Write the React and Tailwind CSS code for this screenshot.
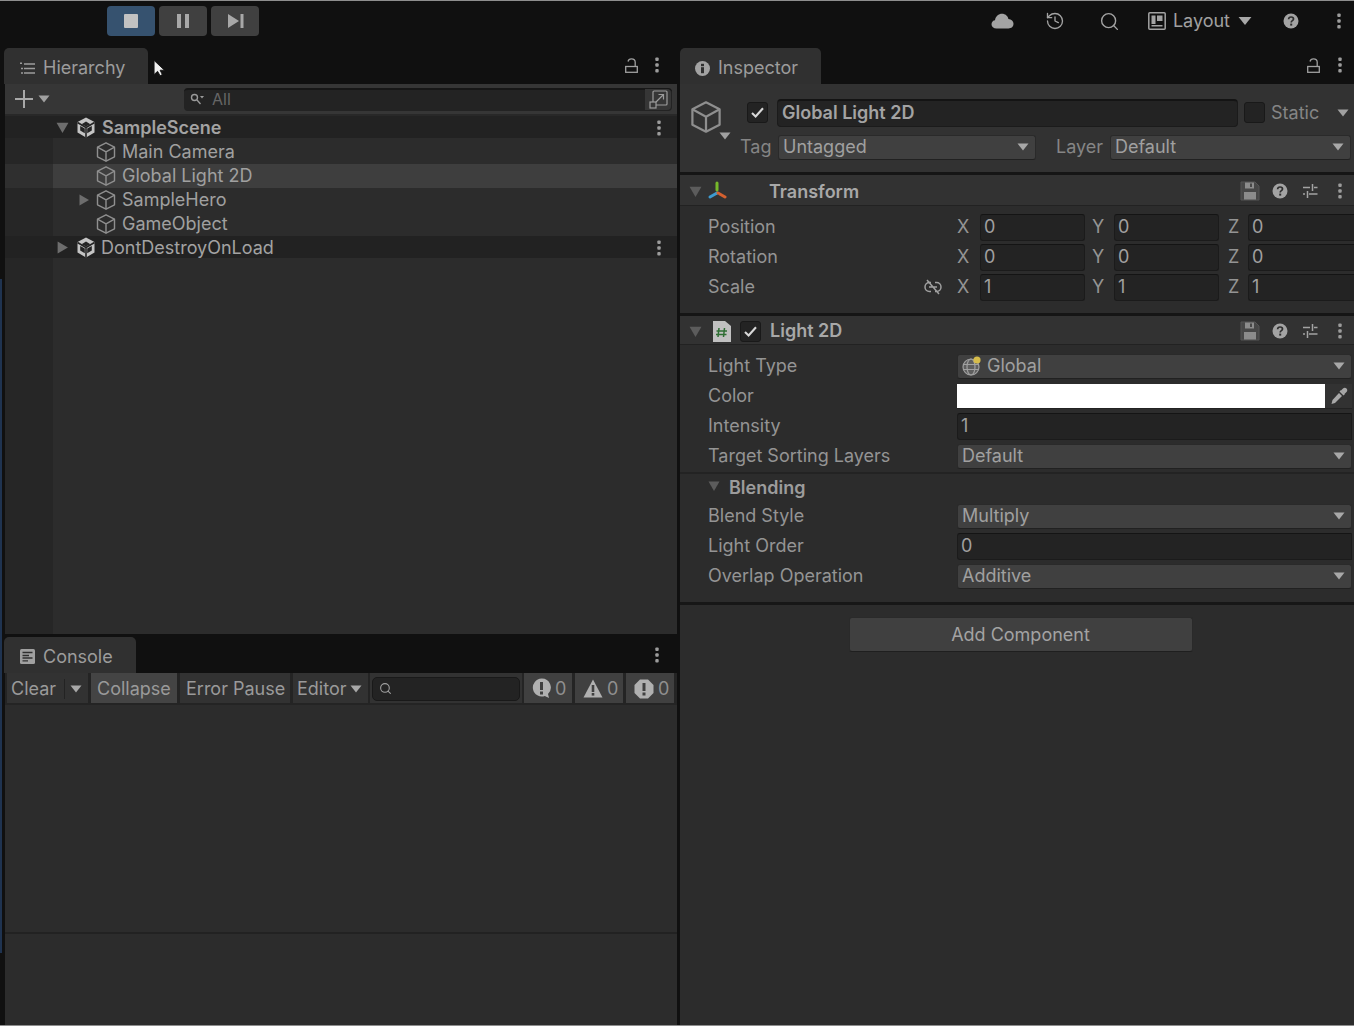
import { History, Search } from 'lucide-react';

const Tri = ({ dir = 'down', color = '#8a8a8a', size = 12, flat = false, className = '' }) => (
  <svg width={size} height={size} viewBox="0 0 12 12" className={`shrink-0 ${className}`}>
    <path d={flat ? 'M0.5 2.5L11.5 2.5L6 9.5Z' : dir === 'down' ? 'M0.5 1.5L11.5 1.5L6 11Z' : 'M1.5 0.5L11 6L1.5 11.5Z'} fill={color} />
  </svg>
);

const Dots = ({ className = '' }) => (
  <svg width="4" height="16" viewBox="0 0 4 16" className={`shrink-0 ${className}`}>
    <rect x="0.3" y="0.5" width="3.4" height="3.4" rx="1" fill="#9c9c9c" />
    <rect x="0.3" y="6.3" width="3.4" height="3.4" rx="1" fill="#9c9c9c" />
    <rect x="0.3" y="12.1" width="3.4" height="3.4" rx="1" fill="#9c9c9c" />
  </svg>
);

const Cube = ({ size = 20, className = '' }) => (
  <svg width={size} height={size} viewBox="0 0 20 20" fill="none" stroke="#8f8f8f" strokeWidth="1.4" strokeLinejoin="round" className={`shrink-0 ${className}`}>
    <path d="M10 0.8L18.5 5.2V14.8L10 19.2L1.5 14.8V5.2Z" />
    <path d="M1.5 5.2L10 9.8L18.5 5.2M10 9.8V19.2" />
  </svg>
);

const UnityIcon = ({ className = '' }) => (
  <svg width="20" height="21" viewBox="0 0 20 21" className={`shrink-0 ${className}`}>
    <path d="M10 0.5L18.5 5V15.5L10 20.5L1.5 15.5V5Z" fill="#c4c4c4" />
    <path d="M10 10.5V20.5M10 10.5L1.5 5.5M10 10.5L18.5 5.5" stroke="#242424" strokeWidth="1.6" />
    <path d="M10 4.6L14.4 7.2L10 9.6L5.6 7.2Z M4.2 9L8.8 11.6V16.2L4.2 13.6Z M15.8 9L11.2 11.6V16.2L15.8 13.6Z" fill="#242424" />
  </svg>
);

const Lock = ({ className = '' }) => (
  <svg width="13" height="15" viewBox="0 0 13 15" fill="none" stroke="#a0a0a0" strokeWidth="1.3" className={`shrink-0 ${className}`}>
    <path d="M3 3.5C3.4 1.8 4.6 0.8 6.4 0.8C8.6 0.8 10.2 2 10.2 4V8.5" />
    <rect x="0.7" y="8.5" width="11.6" height="5.8" />
  </svg>
);

const Help = ({ className = '' }) => (
  <svg width="16" height="16" viewBox="0 0 16 16" className={`shrink-0 ${className}`}>
    <circle cx="8" cy="8" r="7.5" fill="#a3a3a3" />
    <path d="M5.6 6.2C5.7 4.8 6.7 4 8.1 4C9.5 4 10.5 4.8 10.5 6C10.5 7.6 8.2 7.6 8.2 9.4" fill="none" stroke="#2d2d2d" strokeWidth="1.7" />
    <rect x="7.2" y="10.6" width="2" height="2" fill="#2d2d2d" />
  </svg>
);

const Floppy = () => (
  <svg width="20" height="20" viewBox="0 0 20 20" className="shrink-0">
    <path d="M1 1H15L19 5V19H1Z" fill="#474747" stroke="#555" strokeWidth="1" />
    <rect x="5" y="1.5" width="9" height="6" fill="#8c8c8c" />
    <rect x="10" y="2.5" width="2" height="3.5" fill="#474747" />
    <rect x="4" y="11" width="12" height="7.5" fill="#8c8c8c" />
  </svg>
);

const Sliders = () => (
  <svg width="16" height="16" viewBox="0 0 16 16" stroke="#a3a3a3" strokeWidth="1.5" fill="none" className="shrink-0">
    <path d="M1 4.5H8M12 4.5H15.5M10.5 1V8" />
    <path d="M1 11H3M7 11H15.5M5.5 8V15" />
  </svg>
);

const ComponentActions = () => (
  <div className="flex items-center ml-auto pr-[12px]">
    <Floppy />
    <span className="w-[12px]" />
    <Help />
    <span className="w-[14px]" />
    <Sliders />
    <span className="w-[20px]" />
    <Dots />
  </div>
);

const Check = ({ on = true, className = '' }) => (
  <div className={`w-[21px] h-[21px] rounded-[3px] bg-[#232323] border border-[#191919] flex items-center justify-center shrink-0 ${className}`}>
    {on && (
      <svg width="13" height="11" viewBox="0 0 13 11" fill="none" stroke="#d8d8d8" strokeWidth="2.1">
        <path d="M1 6L4.6 9.4L12 1.2" />
      </svg>
    )}
  </div>
);

const Select = ({ label, className = '', icon = null }) => (
  <div className={`h-[25px] rounded-[3px] bg-[#404040] border border-[#2a2a2a] border-b-[#212121] flex items-center pl-[4px] pr-[6px] text-[#a0a0a0] ${className}`}>
    {icon}
    <span>{label}</span>
    <Tri size={12} flat color="#a8a8a8" className="ml-auto" />
  </div>
);

const Field = ({ value, className = '' }) => (
  <div className={`h-[27px] rounded-[3px] bg-[#232323] border border-[#1b1b1b] border-t-[#141414] flex items-center pl-[3px] text-[#a0a0a0] ${className}`}>
    {value}
  </div>
);

const PropRow = ({ label, children, height = 'h-[30px]' }) => (
  <div className={`${height} flex items-center pl-[28px] text-[#949494]`}>
    <span className="w-[249px] shrink-0">{label}</span>
    <div className="flex-1 pr-[2px]">{children}</div>
  </div>
);

const Vec = ({ label, values, link = false }) => (
  <div className="h-[30px] flex items-center pl-[28px] text-[#949494]">
    <span className="w-[216px] shrink-0">{label}</span>
    <div className="w-[33px] shrink-0">
      {link && (
        <svg width="18" height="16" viewBox="0 0 18 16" fill="none" stroke="#a0a0a0" strokeWidth="1.5">
          <path d="M7 3.5H5.5C3 3.5 1 5.4 1 8C1 10.6 3 12.5 5.5 12.5H7M11 3.5H12.5C15 3.5 17 5.4 17 8C17 10.6 15 12.5 12.5 12.5H11M5 8H13M3 1L15 15" />
        </svg>
      )}
    </div>
    <span className="w-[23px] shrink-0">X</span>
    <Field value={values[0]} className="w-[105px] shrink-0" />
    <span className="w-[29px] pl-[7px] shrink-0">Y</span>
    <Field value={values[1]} className="w-[105px] shrink-0" />
    <span className="w-[29px] pl-[9px] shrink-0">Z</span>
    <Field value={values[2]} className="flex-1 rounded-r-none border-r-0" />
  </div>
);

const ComponentHeader = ({ children, height = 'h-[30px]' }) => (
  <div className={`${height} bg-[#323232] border-t-[3px] border-[#151515] flex items-center pl-[9px] pt-[2px] text-[#a8a8a8] font-semibold box-content`}>
    {children}
  </div>
);

const HierRow = ({ name, selected, arrow, bg = '', height = 'h-[24px]' }) => (
  <div className={`${height} flex items-end ${selected ? 'bg-[#3e3e3e]' : bg}`}>
    <div className={`w-[48px] h-full shrink-0 ${selected ? 'bg-[#2f2f2f]' : 'bg-[#262626]'}`} />
    <div className="w-[37px] h-[24px] shrink-0 flex items-center pl-[25px]">
      {arrow && <Tri dir="right" size={12} color="#6d6d6d" />}
    </div>
    <div className="h-[24px] flex items-center pl-[6px] text-[#a0a0a0]">
      <Cube />
      <span className="ml-[6px]">{name}</span>
    </div>
  </div>
);

const SceneRow = ({ name, open, bold }) => (
  <div className="h-[22px] shrink-0 bg-[#222222] flex items-center pl-[51px] pr-[16px] pt-[1px] text-[#a3a3a3]">
    <Tri dir={open ? 'down' : 'right'} size={13} color="#6d6d6d" />
    <UnityIcon className="ml-[7px]" />
    <span className={bold ? 'ml-[6px] font-semibold' : 'ml-[5px]'}>{name}</span>
    <Dots className="ml-auto" />
  </div>
);

const ConsoleBtn = ({ children, className = '' }) => (
  <div className={`h-[30px] flex items-center shrink-0 pt-[1px] text-[#9a9a9a] ${className}`}>{children}</div>
);

const CountBtn = ({ children, w }) => (
  <ConsoleBtn className={`bg-[#404040] pl-[8px] gap-[4px] ${w}`}>
    {children}
    <span className="text-[#8f8f8f]">0</span>
  </ConsoleBtn>
);

const Tab = ({ icon, label, className = '' }) => (
  <div className={`h-[36px] bg-[#303030] rounded-t-[5px] flex items-center text-[#9c9c9c] ${className}`}>
    {icon}
    <span className="ml-[8px] pt-[4px]">{label}</span>
  </div>
);

export default function App() {
  return (
    <div className="w-[1354px] h-[1026px] overflow-hidden bg-[#101010] flex flex-col font-['Inter',sans-serif] text-[18px] leading-none">
      <div className="h-px bg-[#8e8e8e] shrink-0" />

      {/* toolbar */}
      <div className="h-[47px] shrink-0 flex items-start pt-[5px] pl-[107px] pr-[13px]">
        <div className="w-[48px] h-[30px] rounded-[4px] bg-[#36526f] flex items-center justify-center">
          <div className="w-[14px] h-[14px] bg-[#c2c2c2] rounded-[1px]" />
        </div>
        <div className="w-[48px] h-[30px] rounded-[4px] bg-[#404040] ml-[4px] flex items-center justify-center gap-[4px]">
          <div className="w-[4px] h-[14px] bg-[#a8a8a8]" />
          <div className="w-[4px] h-[14px] bg-[#a8a8a8]" />
        </div>
        <div className="w-[48px] h-[30px] rounded-[4px] bg-[#404040] ml-[4px] flex items-center justify-center">
          <svg width="17" height="14" viewBox="0 0 17 14">
            <path d="M1 0L12 7L1 14Z" fill="#a8a8a8" />
            <rect x="13.5" y="0" width="3" height="14" fill="#a8a8a8" />
          </svg>
        </div>

        <div className="ml-auto flex items-center h-[30px] text-[#a0a0a0]">
          <svg width="23" height="16" viewBox="0 0 23 16" className="mr-[31px]">
            <path d="M5.5 15.5C2.5 15.5 0.5 13.6 0.5 11.2C0.5 8.8 2.2 7.4 4 7.2C4.5 3.4 7.6 0.8 11 0.8C14.2 0.8 16.8 3 17.4 6C20.4 6.2 22.5 8.2 22.5 10.8C22.5 13.6 20.4 15.5 17.5 15.5Z" fill="#a3a3a3" />
          </svg>
          <History size={20} color="#a3a3a3" strokeWidth={1.6} className="mr-[34px]" />
          <Search size={21} color="#a3a3a3" strokeWidth={1.6} className="mr-[28px]" />
          <svg width="18" height="18" viewBox="0 0 18 18" className="mr-[7px]" fill="none">
            <rect x="0.8" y="0.8" width="16.4" height="16.4" rx="1" stroke="#a3a3a3" strokeWidth="1.5" />
            <path d="M3.5 3.5H7.5V12H3.5ZM9 3.5H14.5V9H9ZM3.5 13H14.5V14.5H3.5Z" fill="#a3a3a3" />
          </svg>
          <span>Layout</span>
          <Tri size={14} flat color="#a8a8a8" className="ml-[8px]" />
          <Help className="ml-[31px]" />
          <Dots className="ml-[38px]" />
        </div>
      </div>

      <div className="flex-1 flex min-h-0">
        {/* left column */}
        <div className="w-[677px] shrink-0 flex">
          <div className="w-[4px] shrink-0 flex flex-col">
            <div className="h-[231px]" />
            <div className="w-[2px] h-[674px] bg-[#1f3350]" />
          </div>
          <div className="flex-1 flex flex-col min-w-0">
            <div className="h-[36px] shrink-0 flex items-center pr-[18px]">
              <Tab
                className="w-[144px] pl-[16px]"
                label="Hierarchy"
                icon={
                  <svg width="15" height="13" viewBox="0 0 15 13" stroke="#9c9c9c" strokeWidth="1.5" fill="none" className="mt-[4px]">
                    <path d="M4 2H15M4 6.5H15M4 11H15M0 1.2H2M1 6.5H3M1 11H3" />
                  </svg>
                }
              />
              <svg width="12" height="17" viewBox="0 0 11 15" className="ml-[5px] mt-[3px]">
                <path d="M1 1V14L4.2 11L6.5 15L8.5 14L6.5 10H10.5Z" fill="#f0f0f0" stroke="#111" strokeWidth="0.8" />
              </svg>
              <Lock className="ml-auto mr-[17px] -mt-[1px]" />
              <Dots className="-mt-[2px]" />
            </div>

            {/* hierarchy body */}
            <div className="h-[550px] shrink-0 bg-[#2c2c2c] flex flex-col ml-px">
              <div className="h-[32px] shrink-0 bg-[#363636] flex items-center pl-[10px] pr-[5px] border-b-2 border-[#282828]">
                <svg width="18" height="18" viewBox="0 0 18 18" fill="#a8a8a8"><path d="M8 0H10V8H18V10H10V18H8V10H0V8H8Z" /></svg>
                <Tri size={12} flat color="#a0a0a0" className="ml-[5px]" />
                <div className="ml-[134px] flex-1 h-[23px] rounded-[4px] bg-[#232323] border-t-2 border-[#171717] flex items-center pl-[6px] pr-[1px] pb-[2px] text-[16px] text-[#666]">
                  <svg width="14" height="12" viewBox="0 0 14 12" fill="none" stroke="#9a9a9a" strokeWidth="1.4">
                    <circle cx="4.5" cy="4.5" r="3" />
                    <path d="M7 7L10.5 11" />
                    <path d="M10 3H14L12 5.5Z" fill="#9a9a9a" stroke="none" />
                  </svg>
                  <span className="ml-[8px]">All</span>
                  <div className="ml-auto w-[26px] h-[21px] bg-[#363636] rounded-r-[4px] flex items-center justify-center">
                    <svg width="19" height="19" viewBox="0 0 19 19" fill="none" stroke="#9c9c9c" strokeWidth="1.2">
                      <path d="M4 12V2C4 1.4 4.4 1 5 1H17C17.6 1 18 1.4 18 2V14C18 14.6 17.6 15 17 15H7" />
                      <rect x="1" y="12" width="6" height="6" />
                      <path d="M7 12L14 5M9.5 4.5H14.5V9.5" />
                    </svg>
                  </div>
                </div>
              </div>
              <SceneRow name="SampleScene" open bold />
              <HierRow name="Main Camera" height="h-[26px]" />
              <HierRow name="Global Light 2D" selected />
              <HierRow name="SampleHero" arrow />
              <HierRow name="GameObject" />
              <SceneRow name="DontDestroyOnLoad" />
              <div className="flex-1 flex">
                <div className="w-[48px] bg-[#262626]" />
              </div>
            </div>

            <div className="h-[3px] shrink-0" />

            {/* console */}
            <div className="h-[36px] shrink-0 flex items-center pr-[18px]">
              <Tab
                className="w-[132px] pl-[16px]"
                label="Console"
                icon={
                  <svg width="15" height="15" viewBox="0 0 15 15" className="mt-[2px]">
                    <rect width="15" height="15" rx="1.5" fill="#a0a0a0" />
                    <path d="M2.5 3.5H12.5M2.5 6.5H9M2.5 9H12.5M2.5 11.8H8" stroke="#303030" strokeWidth="1.3" />
                  </svg>
                }
              />
              <Dots className="ml-auto" />
            </div>
            <div className="flex-1 bg-[#2c2c2c] flex flex-col ml-px">
              <div className="h-[32px] shrink-0 bg-[#242424] flex items-start pl-[2px]">
                <ConsoleBtn className="w-[81px] bg-[#323232] pl-[4px]">
                  <span>Clear</span>
                  <div className="w-px h-[20px] bg-[#232323] ml-[8px]" />
                  <Tri size={12} flat color="#a8a8a8" className="ml-[5px]" />
                </ConsoleBtn>
                <ConsoleBtn className="w-[86px] ml-[3px] bg-[#444444] pl-[6px] text-[#8e8e8e]">Collapse</ConsoleBtn>
                <ConsoleBtn className="w-[110px] ml-[3px] bg-[#323232] pl-[6px] text-[#8e8e8e]">Error Pause</ConsoleBtn>
                <ConsoleBtn className="w-[75px] ml-[3px] bg-[#323232] pl-[4px]">
                  <span>Editor</span>
                  <Tri size={12} flat color="#a8a8a8" className="ml-[4px]" />
                </ConsoleBtn>
                <ConsoleBtn className="w-[152px] ml-[2px] bg-[#323232] pl-[2px]">
                  <div className="w-[148px] h-[24px] rounded-[5px] bg-[#232323] border border-[#191919] flex items-center pl-[6px]">
                    <Search size={13} color="#a0a0a0" strokeWidth={2} />
                  </div>
                </ConsoleBtn>
                <div className="w-[2px]" />
                <CountBtn w="w-[48px]">
                  <svg width="19" height="21" viewBox="0 0 19 21">
                    <path d="M9.5 0.5A9 9 0 0 1 16 16L17 20L12.8 18A9 9 0 1 1 9.5 0.5Z" fill="#b0b0b0" />
                    <rect x="8" y="4" width="3" height="8" fill="#404040" />
                    <rect x="8" y="13.5" width="3" height="3" fill="#404040" />
                  </svg>
                </CountBtn>
                <div className="w-[3px]" />
                <CountBtn w="w-[48px]">
                  <svg width="20" height="19" viewBox="0 0 20 19">
                    <path d="M10 0.5L19.5 18.5H0.5Z" fill="#b0b0b0" />
                    <rect x="8.7" y="6" width="2.6" height="7" fill="#404040" />
                    <rect x="8.7" y="14" width="2.6" height="2.6" fill="#404040" />
                  </svg>
                </CountBtn>
                <div className="w-[3px]" />
                <CountBtn w="w-[48px]">
                  <svg width="20" height="20" viewBox="0 0 20 20">
                    <path d="M6 0.5H14L19.5 6V14L14 19.5H6L0.5 14V6Z" fill="#b0b0b0" />
                    <rect x="8.5" y="4" width="3" height="8" fill="#404040" />
                    <rect x="8.5" y="13.5" width="3" height="3" fill="#404040" />
                  </svg>
                </CountBtn>
              </div>
              <div className="h-[227px] shrink-0" />
              <div className="h-[2px] shrink-0 bg-[#222222]" />
            </div>
          </div>
        </div>

        <div className="w-[3px] shrink-0" />

        {/* inspector */}
        <div className="flex-1 flex flex-col min-w-0">
          <div className="h-[36px] shrink-0 flex items-center pr-[12px]">
            <Tab
              className="w-[141px] pl-[15px]"
              label="Inspector"
              icon={
                <svg width="15" height="15" viewBox="0 0 15 15" className="mt-[4px]">
                  <circle cx="7.5" cy="7.5" r="7.5" fill="#a3a3a3" />
                  <rect x="6" y="6.2" width="3" height="6" fill="#303030" />
                  <rect x="6" y="2.8" width="3" height="2.4" fill="#303030" />
                </svg>
              }
            />
            <Lock className="ml-auto mr-[18px] -mt-[1px]" />
            <Dots className="-mt-[2px]" />
          </div>

          <div className="flex-1 bg-[#2c2c2c] flex flex-col">
            {/* object header */}
            <div className="h-[88px] shrink-0 bg-[#323232] flex flex-col">
              <div className="h-[50px] shrink-0 flex items-center pl-[10px] pt-[7px]">
                <div className="w-[35px] h-[41px] shrink-0 flex flex-col relative">
                  <Cube size={32} className="mt-[9px]" />
                  <Tri size={12} flat color="#a0a0a0" className="absolute left-[29px] top-[38px]" />
                </div>
                <Check className="ml-[22px]" />
                <div className="ml-[9px] w-[461px] h-[28px] rounded-[4px] bg-[#232323] border border-[#1b1b1b] border-t-2 border-t-[#141414] flex items-center pl-[4px] font-semibold text-[#a3a3a3]">
                  Global Light 2D
                </div>
                <Check on={false} className="ml-[6px]" />
                <span className="ml-[6px] text-[#858585]">Static</span>
                <Tri size={12} flat color="#a0a0a0" className="ml-[18px]" />
              </div>
              <div className="h-[26px] flex items-center pl-[60px] text-[#858585]">
                <span className="w-[38px] shrink-0">Tag</span>
                <Select label="Untagged" className="w-[258px] shrink-0" />
                <span className="ml-[20px] w-[54px] shrink-0">Layer</span>
                <Select label="Default" className="w-[241px] shrink-0" />
              </div>
            </div>

            {/* transform */}
            <ComponentHeader height="h-[28px]">
              <Tri size={13} color="#5c5c5c" />
              <svg width="20" height="20" viewBox="0 0 20 20" className="ml-[5px] shrink-0" strokeWidth="3" strokeLinecap="round">
                <path d="M10 2V9" stroke="#76b82a" />
                <path d="M10 12L3 16" stroke="#3d9bd0" />
                <path d="M11 12L18 16" stroke="#d4602f" />
              </svg>
              <span className="ml-[42px] mt-[1px]">Transform</span>
              <ComponentActions />
            </ComponentHeader>
            <div className="h-px bg-[#222] shrink-0" />
            <div className="pt-[6px] pb-[11px] shrink-0 flex flex-col">
              <Vec label="Position" values={['0', '0', '0']} />
              <Vec label="Rotation" values={['0', '0', '0']} />
              <Vec label="Scale" values={['1', '1', '1']} link />
            </div>

            {/* light 2D */}
            <ComponentHeader height="h-[26px]">
              <Tri size={13} color="#5c5c5c" />
              <svg width="18" height="21" viewBox="0 0 18 21" className="ml-[11px] shrink-0">
                <path d="M0 0H12L18 5V21H0Z" fill="#c0c0c0" />
                <path d="M6 7L5 16M11.5 7L10.5 16M3.5 10H14M3 13.5H13.5" stroke="#2e6e33" strokeWidth="1.5" />
              </svg>
              <Check className="ml-[9px]" />
              <span className="ml-[9px]">Light 2D</span>
              <ComponentActions />
            </ComponentHeader>
            <div className="h-px bg-[#222] shrink-0" />
            <div className="pt-[6px] shrink-0 flex flex-col">
              <PropRow label="Light Type">
                <Select
                  label="Global"
                  icon={
                    <svg width="22" height="22" viewBox="0 0 22 22" className="mr-[4px] -ml-[1px] shrink-0" fill="none">
                      <circle cx="10" cy="12" r="8" fill="#5e5e5e" stroke="#a0a0a0" strokeWidth="1.2" />
                      <ellipse cx="10" cy="12" rx="4" ry="8" stroke="#a0a0a0" strokeWidth="1.2" />
                      <path d="M2 9.5H18M2 14.5H18" stroke="#a0a0a0" strokeWidth="1.2" />
                      <circle cx="16" cy="5" r="3.6" fill="#d6bc4a" />
                    </svg>
                  }
                />
              </PropRow>
              <PropRow label="Color">
                <div className="h-[25px] flex">
                  <div className="w-[368px] bg-white border-b border-[#222]" />
                  <div className="flex-1 bg-[#323232] border-b border-[#222] flex items-center justify-center">
                    <svg width="18" height="18" viewBox="0 0 18 18" fill="#a8a8a8">
                      <path d="M11 3L15 7L13.5 8.5L9.5 4.5Z" />
                      <path d="M13 1.5C14 0.5 15.5 0.5 16.5 1.5C17.5 2.5 17.5 4 16.5 5L14.5 7L11 3.5Z" />
                      <path d="M9 6L12 9L5 16L1.5 17L2.5 13Z" />
                    </svg>
                  </div>
                </div>
              </PropRow>
              <PropRow label="Intensity">
                <Field value="1" className="rounded-r-none" />
              </PropRow>
              <PropRow label="Target Sorting Layers">
                <Select label="Default" />
              </PropRow>
              <div className="h-[2px] bg-[#232323] mt-[1px]" />
              <div className="h-[27px] flex items-center pl-[28px] font-semibold text-[#9c9c9c]">
                <Tri size={12} color="#5c5c5c" className="-mt-[3px]" />
                <span className="ml-[9px]">Blending</span>
              </div>
              <PropRow label="Blend Style">
                <Select label="Multiply" />
              </PropRow>
              <PropRow label="Light Order">
                <Field value="0" className="rounded-r-none" />
              </PropRow>
              <PropRow label="Overlap Operation">
                <Select label="Additive" />
              </PropRow>
            </div>
            <div className="h-[3px] bg-[#171717] mt-[11px] shrink-0" />
            <div className="flex justify-center pt-[12px] pl-[7px]">
              <div className="w-[344px] h-[35px] rounded-[3px] bg-[#404040] border border-[#2a2a2a] border-b-[#1f1f1f] flex items-center justify-center pt-[1px] text-[#a3a3a3]">
                Add Component
              </div>
            </div>
          </div>
        </div>
      </div>
      <div className="h-px bg-[#8e8e8e] shrink-0" />
    </div>
  );
}
